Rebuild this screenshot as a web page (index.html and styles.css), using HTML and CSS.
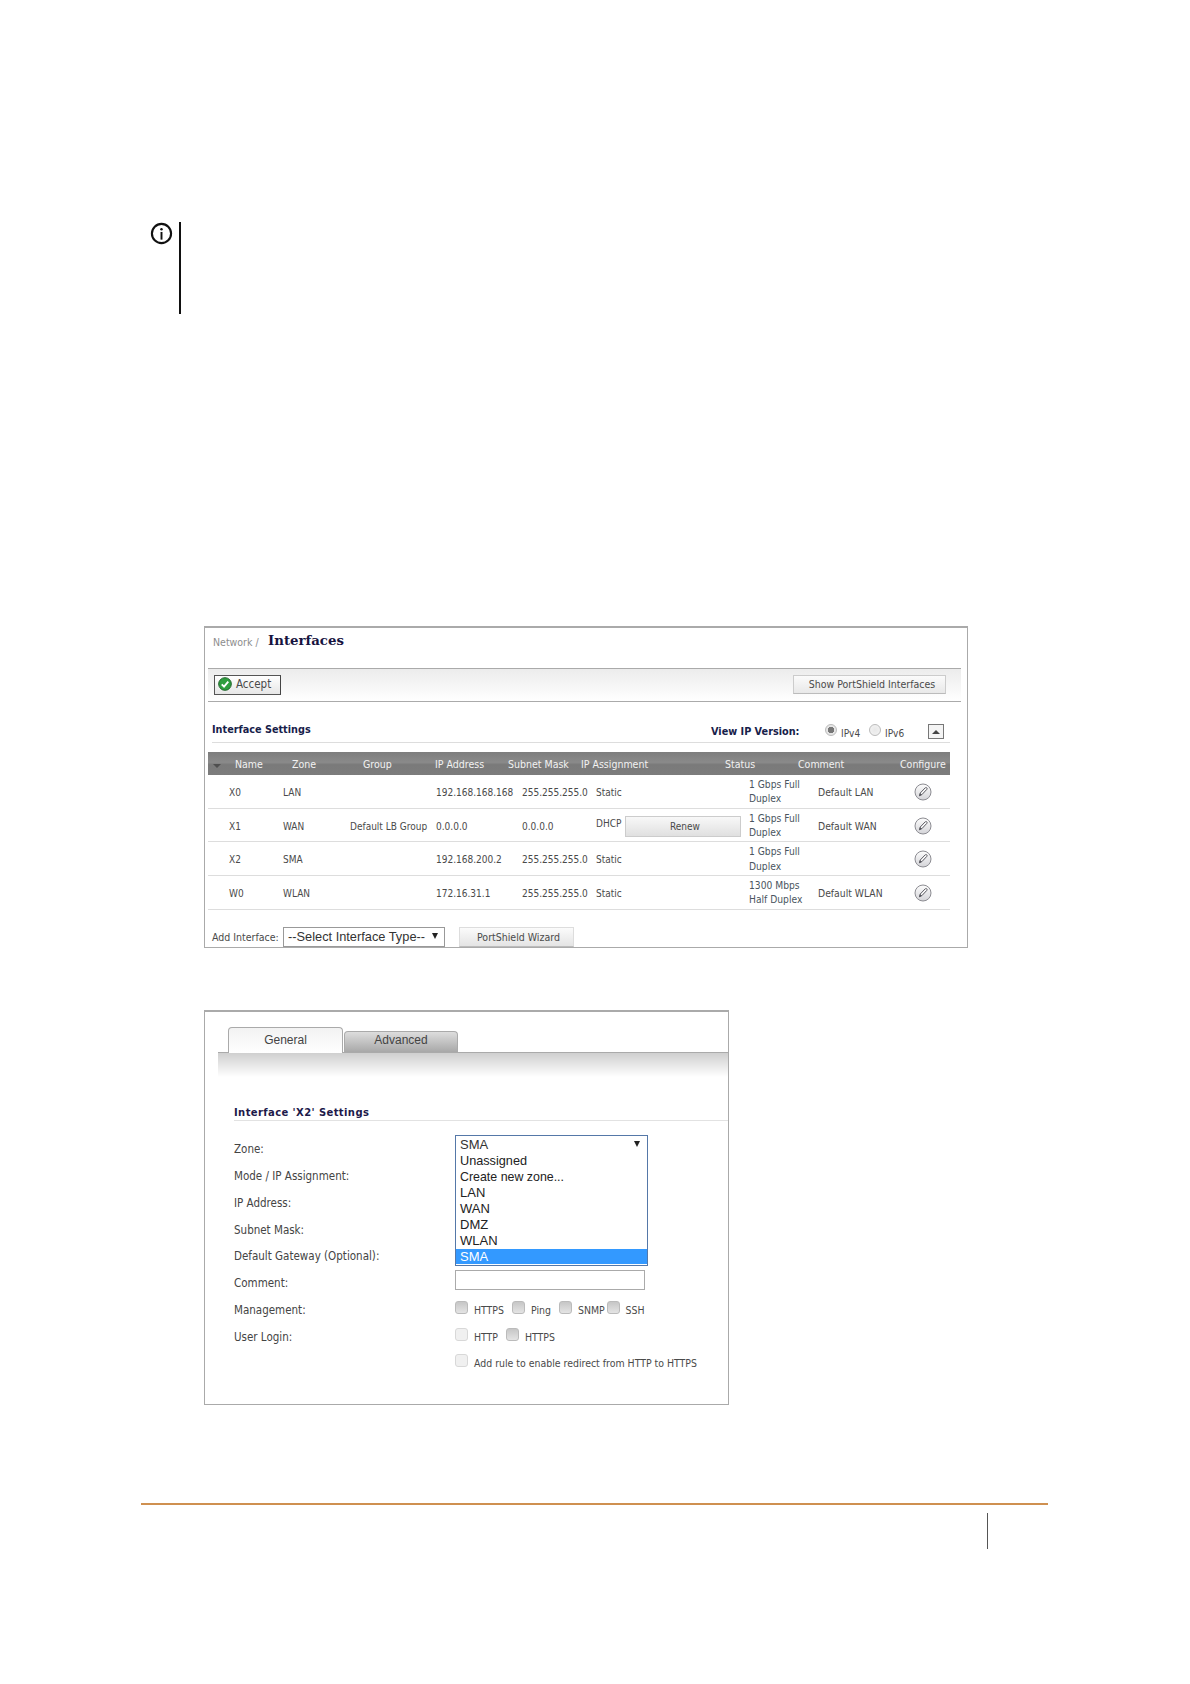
FILE: index.html
```html
<!DOCTYPE html>
<html lang="en">
<head>
<meta charset="utf-8">
<title>Interfaces</title>
<link rel="stylesheet" href="styles.css">
</head>
<body>
<div class="page">
  <div class="note">
    <svg class="info" width="24" height="24" viewBox="0 0 24 24"><circle cx="12" cy="12" r="10" fill="none" stroke="#111" stroke-width="2.2"/><circle cx="12" cy="7.6" r="1.3" fill="#111"/><rect x="11" y="10.4" width="2" height="8" fill="#111"/></svg>
    <div class="note-rule"></div>
  </div>

  <section class="panel panel-ifaces">
    <div class="crumbs"><span class="crumb">Network /</span><span class="title">Interfaces</span></div>
    <div class="toolbar">
      <button class="btn-accept"><svg width="14" height="14" viewBox="0 0 15 15"><circle cx="7.5" cy="7.5" r="6.8" fill="#2f9e3f" stroke="#1d5f28"/><path d="M4 7.8l2.5 2.6L11 5" fill="none" stroke="#fff" stroke-width="2"/></svg>Accept</button>
      <button class="btn-show">Show PortShield Interfaces</button>
    </div>
    <div class="settings-head">
      <span class="h-settings">Interface Settings</span>
      <span class="ipver">
        <b class="ipver-label">View IP Version:</b>
        <span class="radio radio-on"></span><span class="ipv ipv4">IPv4</span>
        <span class="radio"></span><span class="ipv ipv6">IPv6</span>
        <span class="collapse"><i></i></span>
      </span>
    </div>
    <div class="thead">
      <span class="sort"></span><span>Name</span><span>Zone</span><span>Group</span><span>IP Address</span><span>Subnet Mask</span><span>IP Assignment</span><span>Status</span><span>Comment</span><span>Configure</span>
    </div>
    <div class="trow">
      <span class="c-name">X0</span><span>LAN</span><span></span><span>192.168.168.168</span><span>255.255.255.0</span><span>Static</span><span class="status">1 Gbps Full<br>Duplex</span><span class="cmt">Default LAN</span>
      <svg class="edit" width="18" height="18" viewBox="0 0 18 18"><use href="#pencil"/></svg>
    </div>
    <div class="trow">
      <span class="c-name">X1</span><span>WAN</span><span>Default LB Group</span><span>0.0.0.0</span><span>0.0.0.0</span><span class="dhcp"><span class="dhcp-label">DHCP</span><button class="btn-renew">Renew</button></span><span class="status">1 Gbps Full<br>Duplex</span><span class="cmt">Default WAN</span>
      <svg class="edit" width="18" height="18" viewBox="0 0 18 18"><use href="#pencil"/></svg>
    </div>
    <div class="trow">
      <span class="c-name">X2</span><span>SMA</span><span></span><span>192.168.200.2</span><span>255.255.255.0</span><span>Static</span><span class="status">1 Gbps Full<br>Duplex</span><span class="cmt"></span>
      <svg class="edit" width="18" height="18" viewBox="0 0 18 18"><use href="#pencil"/></svg>
    </div>
    <div class="trow">
      <span class="c-name">W0</span><span>WLAN</span><span></span><span>172.16.31.1</span><span>255.255.255.0</span><span>Static</span><span class="status">1300 Mbps<br>Half Duplex</span><span class="cmt">Default WLAN</span>
      <svg class="edit" width="18" height="18" viewBox="0 0 18 18"><use href="#pencil"/></svg>
    </div>
    <div class="add-row">
      <span class="add-label">Add Interface:</span>
      <span class="select select-type">--Select Interface Type--<i class="arrow"></i></span>
      <button class="btn-wizard">PortShield Wizard</button>
    </div>
  </section>

  <section class="panel panel-x2">
    <div class="tabs">
      <span class="tab tab-on">General</span>
      <span class="tab tab-off">Advanced</span>
    </div>
    <div class="tab-fade"></div>
    <h3 class="x2-title">Interface 'X2' Settings</h3>
    <div class="form">
      <span class="lbl">Zone:</span>
      <div class="field">
        <span class="select select-zone">SMA<i class="arrow"></i></span>
        <ul class="menu">
          <li class="first">Unassigned</li>
          <li class="second">Create new zone...</li>
          <li>LAN</li>
          <li>WAN</li>
          <li>DMZ</li>
          <li>WLAN</li>
          <li class="picked">SMA</li>
        </ul>
      </div>
      <span class="lbl">Mode / IP Assignment:</span><div class="field"></div>
      <span class="lbl">IP Address:</span><div class="field"></div>
      <span class="lbl">Subnet Mask:</span><div class="field"></div>
      <span class="lbl">Default Gateway (Optional):</span><div class="field"></div>
      <span class="lbl">Comment:</span>
      <div class="field"><span class="comment"></span></div>
      <span class="lbl">Management:</span>
      <div class="field checks">
        <span class="cb"></span><span class="cl w-https">HTTPS</span>
        <span class="cb"></span><span class="cl w-ping">Ping</span>
        <span class="cb"></span><span class="cl w-snmp">SNMP</span>
        <span class="cb"></span><span class="cl">SSH</span>
      </div>
      <span class="lbl">User Login:</span>
      <div class="field checks">
        <span class="cb cb-off"></span><span class="cl w-http">HTTP</span>
        <span class="cb"></span><span class="cl">HTTPS</span>
      </div>
      <span class="lbl"></span>
      <div class="field checks">
        <span class="cb cb-off"></span><span class="cl">Add rule to enable redirect from HTTP to HTTPS</span>
      </div>
    </div>
  </section>

  <footer class="foot">
    <div class="foot-mark"></div>
  </footer>
</div>
<svg class="defs" width="0" height="0">
  <defs>
    <linearGradient id="pg" x1="0" y1="0" x2="0" y2="1"><stop offset="0" stop-color="#fdfdfd"/><stop offset="1" stop-color="#d4d4d8"/></linearGradient>
    <g id="pencil">
      <circle cx="9" cy="9" r="8" fill="url(#pg)" stroke="#8c8c92" stroke-width="1"/>
      <path d="M5.4 12.8l.8-2.7 5-5.2c.5-.5 1.1-.5 1.6 0 .4.4.4 1 0 1.5l-5 5.3z" fill="#fff" stroke="#55555c" stroke-width="1"/>
      <path d="M5.4 12.8l.8-2.7 1.7 1.7z" fill="#55555c"/>
    </g>
  </defs>
</svg>
</body>
</html>
```
FILE: styles.css
```css
* { box-sizing: border-box; }
html, body { margin: 0; padding: 0; background: #fff; }
body { font-family: "DejaVu Sans Condensed", "DejaVu Sans", sans-serif; font-size: 10px; color: #4a4a4a; }
.page { width: 1190px; height: 1684px; padding-top: 222px; overflow: hidden; }
.defs { position: absolute; }
button { font: inherit; color: inherit; margin: 0; padding: 0; }

.note { display: flex; margin-left: 150px; height: 92px; }
.info { flex: none; width: 23px; height: 23px; }
.note-rule { width: 2px; height: 92px; background: #111; margin-left: 6px; }

.panel { margin-left: 204px; background: #fff; border: 1px solid #aaa; border-top-width: 2px; }
.panel-ifaces { width: 764px; height: 322px; margin-top: 312px; }
.panel-x2 { width: 525px; height: 395px; margin-top: 62px; }

.crumbs { height: 40px; display: flex; align-items: flex-start; padding: 5px 0 0 8px; }
.crumb { color: #8d8d8d; font-size: 10.5px; margin-top: 3px; width: 55px; flex: none; }
.title { font-family: "DejaVu Serif", serif; font-weight: bold; font-size: 13.3px; color: #17143f; }

.toolbar { height: 34px; margin: 0 6px 0 3px; border-top: 1px solid #aaa; border-bottom: 1px solid #aaa; background: linear-gradient(#ececec, #fff); display: flex; justify-content: space-between; align-items: flex-start; padding: 6px 15px 0 6px; }
.btn-accept { width: 67px; height: 20px; border: 1px solid #555; border-right-color: #444; background: linear-gradient(#fff, #e6e6e6); display: flex; align-items: center; gap: 4px; padding: 0 0 2px 3px; font-size: 11.5px; }
.btn-show { width: 153px; height: 19px; border: 1px solid #ccc; border-bottom-color: #bbb; background: linear-gradient(#fbfbfb, #e8e8e8); font-size: 10.5px; padding: 0 0 2px 5px; }

.settings-head { height: 41px; margin: 0 17px 0 7px; border-bottom: 1px solid #ddd; position: relative; display: flex; justify-content: space-between; padding-top: 22px; }
.h-settings { font-family: "DejaVu Sans", sans-serif; font-weight: bold; font-size: 9.7px; color: #17214a; }
.ipver { display: flex; align-items: flex-start; margin: 2px 6px 0 0; }
.ipver-label { font-family: "DejaVu Sans", sans-serif; font-size: 9.7px; color: #17214a; width: 114px; }
.radio { width: 12px; height: 12px; border-radius: 50%; border: 1px solid #bbb; background: radial-gradient(circle, #e8e8e8 0, #f4f4f4 100%); margin-top: -2px; }
.radio-on { background: radial-gradient(circle, #777 0 3px, #e6e6e6 3.5px); }
.ipv { font-size: 10px; margin: 2px 0 0 4px; }
.ipv4 { width: 28px; }
.ipv6 { width: 43px; }
.collapse { width: 16px; height: 15px; border: 1px solid #777; display: flex; align-items: center; justify-content: center; margin-top: -2px; background: #f4f4f4; }
.collapse i { width: 0; height: 0; border-left: 4px solid transparent; border-right: 4px solid transparent; border-bottom: 4px solid #444; }

.thead { margin: 9px 17px 0 3px; width: 742px; height: 23px; background: linear-gradient(#7d7d7d, #8a8a8a 45%, #7a7a7a 55%, #7c7c7c); color: #f2f2f2; font-size: 10.5px; display: grid; grid-template-columns: 27px 57px 71px 72px 73px 73px 144px 73px 102px 50px; align-items: center; white-space: nowrap; }
.sort { justify-self: start; margin: 4px 0 0 5px; width: 0; height: 0; border-left: 4px solid transparent; border-right: 4px solid transparent; border-top: 4px solid #4f4f4f; }

.trow { margin: 0 17px 0 3px; width: 742px; height: 33.7px; padding-top: 2px; border-bottom: 1px solid #ddd; display: grid; grid-template-columns: 75px 67px 86px 86px 74px 153px 69px 91px 28px; align-items: center; white-space: nowrap; }
.c-name { padding-left: 21px; }
.status { line-height: 14.5px; color: #4a5560; font-size: 10.2px; }
.cmt { font-size: 10.3px; }
.edit { justify-self: center; margin-top: -1px; }
.dhcp { display: flex; align-items: center; }
.dhcp-label { width: 29px; margin-top: -6px; }
.btn-renew { width: 116px; height: 21px; border: 1px solid #ccc; background: linear-gradient(#f8f8f8, #e0e0e0); font-size: 10px; padding-left: 4px; }

.add-row { display: flex; align-items: center; margin: 17px 0 0 7px; }
.add-label { width: 71px; font-size: 10.5px; }
.select { font-family: "Liberation Sans", Arial, sans-serif; color: #333; display: flex; align-items: center; position: relative; background: #fff; }
.select-type { width: 162px; height: 20px; border: 1px solid #999; font-size: 12.8px; padding-left: 4px; }
.arrow { position: absolute; right: 6px; top: 5px; width: 0; height: 0; border-left: 3.5px solid transparent; border-right: 3.5px solid transparent; border-top: 6px solid #222; }
.btn-wizard { width: 115px; height: 20px; margin-left: 14px; border: 1px solid #ddd; border-bottom-color: #bbb; background: linear-gradient(#fbfbfb, #e4e4e4); font-size: 10.5px; padding-left: 4px; }

.tabs { height: 41px; display: flex; align-items: flex-end; gap: 1px; border-bottom: 1px solid #aaa; margin-left: 13px; padding-left: 10px; }
.tab { display: flex; justify-content: center; font-family: "Liberation Sans", Arial, sans-serif; font-size: 12px; color: #444; border: 1px solid #aaa; border-bottom: 0; border-radius: 4px 4px 0 0; }
.tab-on { width: 115px; height: 26px; padding-top: 5px; background: linear-gradient(#f2f2f2, #fff); margin-bottom: -1px; }
.tab-off { width: 114px; height: 21px; padding-top: 1px; background: linear-gradient(#ddd, #a8a8a8); }
.tab-fade { height: 24px; margin-left: 13px; background: linear-gradient(#cfcfcf, #fff); }
.x2-title { margin: 30px 0 0 29px; height: 14px; padding: 0; border-bottom: 1px solid #e2e2e2; font-family: "DejaVu Sans", sans-serif; font-weight: bold; font-size: 10px; letter-spacing: .4px; color: #1d1a4a; line-height: 12px; }

.form { display: grid; grid-template-columns: 221px 1fr; grid-auto-rows: 26.85px; margin: 14.6px 0 0 29px; align-items: center; }
.lbl { font-size: 11.5px; color: #444; white-space: nowrap; }
.field { position: relative; height: 100%; display: flex; align-items: center; }
.select-zone { width: 193px; height: 19px; margin-top: -10px; border: 1px solid #5578a8; font-size: 13px; padding-left: 4px; }
.select-zone .arrow { right: 7px; }
.menu { position: absolute; z-index: 2; left: 0; top: 16.4px; width: 193px; height: 114px; margin: 0; padding: 0; list-style: none; background: #fff; border: 1px solid #5578a8; border-top: 0; font-family: "Liberation Sans", Arial, sans-serif; font-size: 13px; color: #222; }
.menu li { height: 15.9px; line-height: 16.6px; padding-left: 4px; }
.menu li.first { height: 17.5px; line-height: 18px; font-size: 12.7px; }
.menu li.second { height: 15.5px; line-height: 17.5px; font-size: 12.4px; }
.menu .picked { background: #3399ff; color: #fff; }
.comment { width: 190px; height: 20px; border: 1px solid #aaa; margin-top: -7px; }
.checks { align-items: flex-start; padding-top: 7px; font-size: 10.45px; }
.cb { width: 13px; height: 13px; border: 1px solid #bbb; border-radius: 3px; background: linear-gradient(#c6c6c6, #e4e4e4); margin-top: -3px; flex: none; }
.cb-off { background: #f0f0f0; border-color: #d8d8d8; }
.cl { margin-left: 6px; white-space: nowrap; }
.w-https { width: 38px; }
.w-ping { width: 28px; }
.w-snmp { width: 28.5px; }
.w-http { width: 32px; }

.foot { margin: 98px 0 0 141px; width: 907px; border-top: 2px solid #cf9050; }
.foot-mark { width: 1px; height: 36px; background: #555; margin: 8px 0 0 846px; }
```
